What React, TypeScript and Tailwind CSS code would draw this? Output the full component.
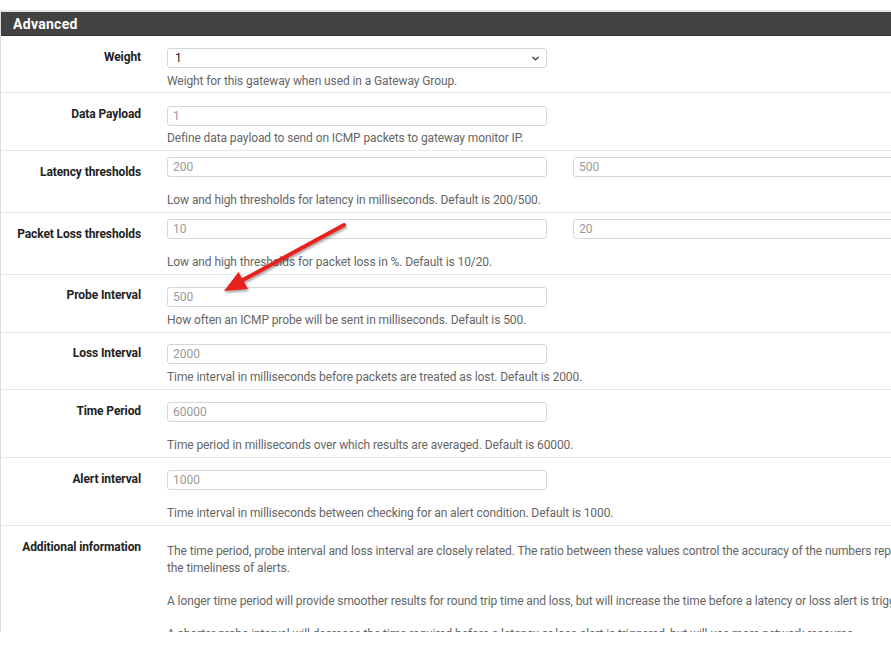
import { ChevronDown } from 'lucide-react'

type Row = {
  label: string
  value: string
  value2?: string
  help: string
  rowCls: string
  labelCls: string
  inputCls: string
  helpCls: string
}

const ROWS: Row[] = [
  {
    label: 'Data Payload',
    value: '1',
    help: 'Define data payload to send on ICMP packets to gateway monitor IP.',
    rowCls: 'h-[58px]',
    labelCls: 'pt-[13px]',
    inputCls: 'mt-[13px]',
    helpCls: 'mt-[4px]',
  },
  {
    label: 'Latency thresholds',
    value: '200',
    value2: '500',
    help: 'Low and high thresholds for latency in milliseconds. Default is 200/500.',
    rowCls: 'h-[62px]',
    labelCls: 'pt-[13px]',
    inputCls: 'mt-[6px]',
    helpCls: 'mt-[15px]',
  },
  {
    label: 'Packet Loss thresholds',
    value: '10',
    value2: '20',
    help: 'Low and high thresholds for packet loss in %. Default is 10/20.',
    rowCls: 'h-[62px]',
    labelCls: 'pt-[13px]',
    inputCls: 'mt-[6px]',
    helpCls: 'mt-[15px]',
  },
  {
    label: 'Probe Interval',
    value: '500',
    help: 'How often an ICMP probe will be sent in milliseconds. Default is 500.',
    rowCls: 'h-[58px]',
    labelCls: 'pt-[12px]',
    inputCls: 'mt-[12px]',
    helpCls: 'mt-[5px]',
  },
  {
    label: 'Loss Interval',
    value: '2000',
    help: 'Time interval in milliseconds before packets are treated as lost. Default is 2000.',
    rowCls: 'h-[57px]',
    labelCls: 'pt-[12px]',
    inputCls: 'mt-[11px]',
    helpCls: 'mt-[5px]',
  },
  {
    label: 'Time Period',
    value: '60000',
    help: 'Time period in milliseconds over which results are averaged. Default is 60000.',
    rowCls: 'h-[68px]',
    labelCls: 'pt-[13px]',
    inputCls: 'mt-[12px]',
    helpCls: 'mt-[15px]',
  },
  {
    label: 'Alert interval',
    value: '1000',
    help: 'Time interval in milliseconds between checking for an alert condition. Default is 1000.',
    rowCls: 'h-[68px]',
    labelCls: 'pt-[13px]',
    inputCls: 'mt-[12px]',
    helpCls: 'mt-[15px]',
  },
]

function Field({ value }: { value: string }) {
  return (
    <div className="w-[380px] h-[20px] shrink-0 rounded-[3px] border border-[#d6d6d6] bg-white px-[5px] text-[12px] leading-[18px] text-[#9a9a9a]">
      {value}
    </div>
  )
}

export default function App() {
  return (
    <div className="relative w-[891px] h-[659px] overflow-hidden bg-white font-['Roboto',sans-serif]">
      <div className="mt-[10px] h-[622px] w-[1200px] overflow-hidden border-l border-[#dcdcdc]">
        <div className="h-[2px] bg-[#e6e6e6]" />
        <div className="h-[24px] bg-[#424242] border-b border-[#333] pl-[12px] pt-[1px] text-[14px] font-bold leading-[23px] tracking-[0.3px] text-white">
          Advanced
        </div>

        {/* Weight */}
        <div className="flex h-[57px] border-b border-[#e8e8e8]">
          <div className="w-[140px] shrink-0 pt-[13px] text-right text-[12px] font-bold leading-[17px] tracking-[-0.1px] text-[#222]">
            Weight
          </div>
          <div className="ml-[26px]">
            <div className="mt-[12px] flex h-[20px] w-[380px] items-center justify-between rounded-[3px] border border-[#d6d6d6] bg-white pl-[7px] pr-[5px] text-[12px] text-[#222]">
              <span>1</span>
              <ChevronDown size={11} strokeWidth={3} className="text-[#333]" />
            </div>
            <div className="mt-[5px] text-[12px] leading-[17px] tracking-[-0.1px] text-[#666]">
              Weight for this gateway when used in a Gateway Group.
            </div>
          </div>
        </div>

        {ROWS.map(r => (
          <div key={r.label} className={`flex border-b border-[#e8e8e8] ${r.rowCls}`}>
            <div className={`w-[140px] shrink-0 text-right text-[12px] font-bold leading-[17px] tracking-[-0.1px] text-[#222] ${r.labelCls}`}>
              {r.label}
            </div>
            <div className="ml-[26px]">
              <div className={`flex gap-[26px] ${r.inputCls}`}>
                <Field value={r.value} />
                {r.value2 && <Field value={r.value2} />}
              </div>
              <div className={`whitespace-nowrap text-[12px] leading-[17px] tracking-[-0.1px] text-[#666] ${r.helpCls}`}>
                {r.help}
              </div>
            </div>
          </div>
        ))}

        {/* Additional information */}
        <div className="flex">
          <div className="w-[140px] shrink-0 pt-[13px] text-right text-[12px] font-bold leading-[17px] tracking-[-0.1px] text-[#222]">
            Additional information
          </div>
          <div className="ml-[26px] pt-[17px] whitespace-nowrap text-[12px] leading-[17px] tracking-[-0.1px] text-[#666]">
            <p>
              The time period, probe interval and loss interval are closely related. The ratio between these values control the accuracy of the numbers reported and
              <br />
              the timeliness of alerts.
            </p>
            <p className="mt-[16px]">
              A longer time period will provide smoother results for round trip time and loss, but will increase the time before a latency or loss alert is triggered.
            </p>
            <p className="mt-[16px]">
              A shorter probe interval will decrease the time required before a latency or loss alert is triggered, but will use more network resource.
            </p>
          </div>
        </div>
      </div>

      <svg className="pointer-events-none absolute left-0 top-0" width="891" height="659">
        <defs>
          <filter id="sh" x="-20%" y="-20%" width="140%" height="140%">
            <feDropShadow dx="1" dy="2" stdDeviation="1.2" floodColor="#000" floodOpacity="0.35" />
          </filter>
        </defs>
        <g filter="url(#sh)">
          <line x1="344" y1="225" x2="241" y2="281" stroke="#e5211d" strokeWidth="4" strokeLinecap="round" />
          <polygon points="224,291 238.5,272 248,289" fill="#e5211d" />
        </g>
      </svg>
    </div>
  )
}
